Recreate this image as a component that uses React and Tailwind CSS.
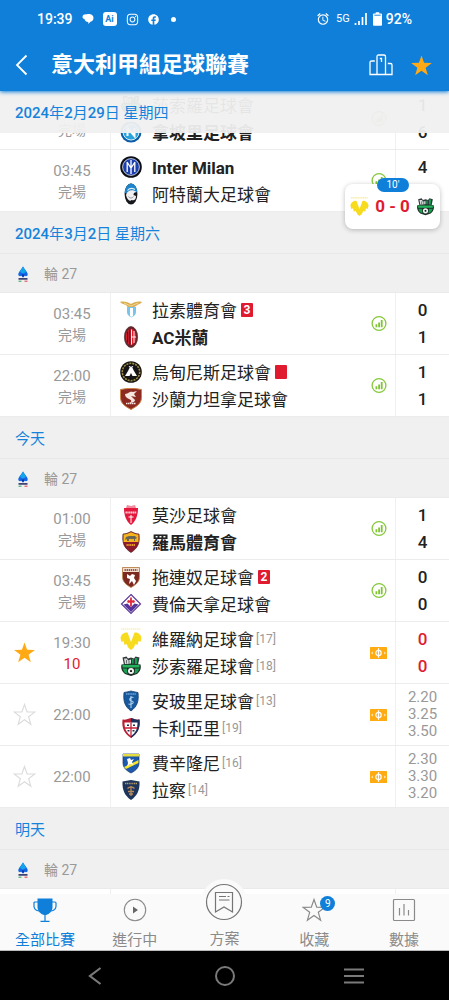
import { FaFacebook, FaInstagram } from "react-icons/fa";
import { MdOutlineAlarm } from "react-icons/md";

const crests = {
  napoli: (
    <>
      <circle cx="11" cy="11" r="10.5" fill="#0d5ea8" />
      <circle cx="11" cy="11" r="8" fill="#29a3dc" stroke="#d7edf8" strokeWidth="1" />
      <path d="M7.5 15V7l7 8V7" fill="none" stroke="#fff" strokeWidth="2" />
    </>
  ),
  inter: (
    <>
      <circle cx="11" cy="11" r="10.8" fill="#0b0e14" />
      <circle cx="11" cy="11" r="8.4" fill="#1c3fae" stroke="#e8ecf8" strokeWidth="0.8" />
      <path d="M11 4v14M7.200 6v10M14.800 6v10M7 6l4 6 4-6" fill="none" stroke="#fff" strokeWidth="1.3" />
    </>
  ),
  atalanta: (
    <>
      <ellipse cx="11" cy="11" rx="6.4" ry="10.5" fill="#15171c" />
      <path d="M4.700 10C4.700 3 9 .5 11 .5S17.300 3 17.300 9L11 10.500z" fill="#1d84cc" />
      <path d="M6 12c1-5 7-6 10.500-3-2 0-3 1-3 3l2.500 1c0 4-2 5-4.500 4-1 2-4.500 0-5.500-5z" fill="#f0eeee" />
      <path d="M7.500 7.500c2-2.500 5-2.500 7.500-1" fill="none" stroke="#dcecf7" strokeWidth="1.200" />
      <path d="M8.500 13.500c1.500 2 3.500 2 5 0" fill="none" stroke="#8a98a5" strokeWidth="1" />
    </>
  ),
  lazio: (
    <>
      <path d="M0 3c4-1 8 0 11 2 3-2 7-3 11-2-1 2-4 2-6 4-2 1-3 2-5 2S7 8 6 6C4 5 2 5 0 3z" fill="#d9ae52" />
      <path d="M4 4l7 3 7-3" fill="none" stroke="#f6dda0" strokeWidth="0.8" />
      <path d="M7 8h9v5c0 3-2 4-4.500 5.500C9 17 7 16 7 13z" fill="#79c4ea" />
      <path d="M10 9h3v8l-1.500 1-1.500-1z" fill="#fff" />
    </>
  ),
  milan: (
    <>
      <ellipse cx="11" cy="11" rx="6.600" ry="10.500" fill="#6e2229" stroke="#4b3034" strokeWidth="0.700" />
      <ellipse cx="11" cy="11" rx="5.200" ry="8" fill="#dd1f30" />
      <path d="M7.700 5.500v11M9.900 3.500v15" stroke="#17151a" strokeWidth="0.900" />
      <path d="M11.500 3.500v15M11.500 11H16M14 5v12" stroke="#fff" strokeWidth="0.900" />
    </>
  ),
  udinese: (
    <>
      <circle cx="11" cy="11" r="10.800" fill="#17150f" />
      <circle cx="11" cy="11" r="8.700" fill="none" stroke="#9a8b4a" strokeWidth="1.600" strokeDasharray="2 1" />
      <circle cx="11" cy="11" r="7" fill="#15151a" />
      <path d="M5 15l3-5 1.500-3h3L14 10l3 5h-4.500L11 12l-1.500 3z" fill="#fff" />
      <path d="M9 5.500l2 1 2-1" stroke="#fff" strokeWidth="1.200" fill="none" />
    </>
  ),
  salernitana: (
    <>
      <path d="M.5 1.500c7-1.500 14-1.500 21 0v8c0 6-5 9-10.500 12C5.500 18.500.5 15.500.5 9.500z" fill="#8c2a22" stroke="#c98345" strokeWidth="1" />
      <path d="M5 6c4 0 4-3 8-2l4-1-3 3 2 3-5-1 4 4c0 2-3 3-6 3 3-1 3-3 0-4-2-1-4-2-4-5z" fill="#f5e7df" />
      <path d="M6 15.500h10" stroke="#f5e7df" strokeWidth="1.500" strokeDasharray="1.500 .5" />
    </>
  ),
  monza: (
    <>
      <path d="M7 1l4 1 4-1 1 3H6z" fill="#ef8b9c" />
      <path d="M4 4h14c0 7-2 13-7 17C6 17 4 11 4 4z" fill="#e4173c" />
      <path d="M5.500 8.500h11" stroke="#fbd0d8" strokeWidth="1.800" strokeDasharray="1.400 .4" />
      <path d="M11 11v8M8.500 13h5" stroke="#fff" strokeWidth="1" />
    </>
  ),
  roma: (
    <>
      <path d="M3 3c3 0 5-1 8-2.500C14 2 16 3 19 3c1 9-1 14-8 18.500C4 17 2 12 3 3z" fill="#8e1a2e" stroke="#4f1d1d" strokeWidth="0.700" />
      <path d="M3.500 3.500c3 0 5-1 7.500-2.200C13.500 2.500 15.500 3.500 18.500 3.500V11h-15z" fill="#f4b51f" />
      <path d="M5 9l1-3 3-1h6l2 2-2 1v2h-1V8H9v2H7V8z" fill="#6a6453" />
      <path d="M6.500 14h9" stroke="#e79a2a" strokeWidth="1.800" strokeDasharray="1.300 .5" />
    </>
  ),
  torino: (
    <>
      <path d="M2.500 1.500h17V11c0 5-4 8-8.500 10.500C6.500 19 2.500 16 2.500 11z" fill="#7c2a20" stroke="#c08a50" strokeWidth="0.800" />
      <path d="M3 2h16v4H3z" fill="#f1dfcf" />
      <path d="M4.500 4h13" stroke="#7c2a20" strokeWidth="1.600" strokeDasharray="1.400 .7" />
      <path d="M7 8l3 2 2-2 3 1-1 3 2 3-2 4-2-4-3 3 1-5-3-1z" fill="#fff" />
    </>
  ),
  fiorentina: (
    <>
      <path d="M11 1.500L20.500 11 11 20.500 1.500 11z" fill="#fff" stroke="#5a3a9a" strokeWidth="1.200" />
      <path d="M3.500 11.500l4-1L11 14l3.500-3.500 4 1L11 19z" fill="#55339a" />
      <path d="M11 4.500v9M8 8.500h6" stroke="#e0283c" strokeWidth="1.800" />
      <circle cx="8.500" cy="8.500" r="1.300" fill="#e0283c" />
      <circle cx="13.500" cy="8.500" r="1.300" fill="#e0283c" />
    </>
  ),
  verona: (
    <>
      <path d="M1 1h20" stroke="#f5ea9a" strokeWidth="1.200" strokeDasharray="1.500 .5" />
      <path d="M.5 10c.5-3 3-6 7-5.500L11 14l3.500-9.500c4-.5 6.500 2.500 7 5.500l-1 4-2-1-1 4-2-1-2 4-2.500 2L8.500 20l-2-4-2 1-1-4-2 1z" fill="#f7db1f" />
    </>
  ),
  sassuolo: (
    <>
      <path d="M2.500 2.500l4-1 1.500 2 3-1 3 1 1.500-2 4 1L18 10H4z" fill="#30363a" />
      <path d="M4 3.500h3l1 2 3-1v4.500H5z" fill="#d9dedc" />
      <path d="M6.500 5v3.500M9 5.500v3" stroke="#30363a" strokeWidth="0.700" />
      <path d="M12 4h1.500v5H12zM15 3h2.500L17 9h-2z" fill="#16a052" />
      <path d="M1.500 9.500L11 8.500l9.500 1c1 4-.5 7-3.500 9.500l-6 2-6-2c-3-2.500-4.500-5.500-3.500-9.500z" fill="#1d2a25" />
      <path d="M2.500 9.800h17v2.700h-17z" fill="#22b45c" />
      <path d="M2.500 13.500h4.500l.5 5.500-3-1.500zM19.500 13.500H15l-.5 5.500 3-1.500z" fill="#17a04f" />
      <circle cx="11" cy="16" r="3" fill="#f3f3f3" />
      <path d="M11 14.800l1.200.9-.4 1.400h-1.600l-.4-1.400z" fill="#15191b" />
    </>
  ),
  empoli: (
    <>
      <path d="M4 2.500C7 2 9 1.500 11 1c2 .5 4 1 7 1.500 1 9-1 14-7 18.500C5 16.500 3 11.500 4 2.500z" fill="#17599f" stroke="#143c6c" strokeWidth="0.800" />
      <path d="M6 4h10" stroke="#6fa3d6" strokeWidth="1.400" strokeDasharray="1.300 .4" />
      <path d="M13.500 7.500c-4-1-5 3-2 3.500s2 4-3 3M11 6v12" fill="none" stroke="#b3d0ec" strokeWidth="1.100" />
    </>
  ),
  cagliari: (
    <>
      <path d="M2.500 2.500C6 3 8 2 11 1c3 1 5 2 8.500 1.500 1 9-2 14-8.500 18.500C4.500 16.500 1.500 11.500 2.500 2.500z" fill="#b81f34" />
      <path d="M11 1c3 1 5 2 8.500 1.500 1 9-2 14-8.500 18.500z" fill="#1b315c" />
      <path d="M4.500 5.500h13c0 7-2 10-6.500 13.500C6.500 15.500 4.500 12.500 4.500 5.500z" fill="#fff" />
      <path d="M11 5.500V19M5 11h12" stroke="#c8213a" strokeWidth="1.300" />
      <path d="M7 8.300h2M13 8.300h2M7.500 13.700h2M12.500 13.700h2" stroke="#222b48" strokeWidth="1.600" />
    </>
  ),
  frosinone: (
    <>
      <path d="M3 2h16v9c0 5-4 8-8 10C7 19 3 16 3 11z" fill="#1c58ac" stroke="#1a3765" strokeWidth="0.700" />
      <path d="M3 2h16v2.500H3z" fill="#e7dc3f" />
      <path d="M4 15L18.500 8v3L6 17z" fill="#f4e32c" />
      <path d="M7 7l3-1 1 2 3-1-2 3 1 3-3-1-3 3 1-4z" fill="#fff" />
    </>
  ),
  lecce: (
    <>
      <path d="M2.500 2.500L11 1l8.500 1.500C20 11 17 17 11 21 5 17 2 11 2.500 2.500z" fill="#1d355b" />
      <path d="M5 4.500h12" stroke="#b79c67" strokeWidth="1.300" strokeDasharray="1.200 .6" />
      <path d="M11 7v10M7.500 9.500c2-2 5-2 7 0M8 12.500h6M9 15h4" fill="none" stroke="#b98b5e" strokeWidth="1.300" />
    </>
  ),
};

function Crest({ team, className = "size-[22px]" }) {
  return (
    <svg viewBox="0 0 22 22" className={`${className} shrink-0`} aria-hidden="true">
      {crests[team]}
    </svg>
  );
}

function Star({ filled, className }) {
  return (
    <svg viewBox="0 0 24 24" className={className} aria-hidden="true">
      <path
        d="M12 1.500l2.700 7.700 8.100.2-6.500 4.900 2.300 7.900L12 17.500l-6.600 4.700 2.300-7.900-6.500-4.900 8.100-.2z"
        fill={filled ? "currentColor" : "none"}
        stroke={filled ? "none" : "currentColor"}
        strokeWidth="1.200"
      />
    </svg>
  );
}

function StatsIcon() {
  return (
    <svg viewBox="0 0 17 17" className="size-[17px]" aria-hidden="true">
      <circle cx="9" cy="8.500" r="6.900" fill="none" stroke="#86c83a" strokeWidth="1.300" />
      <path d="M5.500 9.300h1.800v3H5.500zM8.200 7.500H10v4.800H8.200zM10.800 5h1.800v7.300h-1.800z" fill="#7fc531" />
    </svg>
  );
}

function OddsIcon() {
  return (
    <svg viewBox="0 0 17 12" className="h-3 w-[17px]" aria-hidden="true">
      <rect width="17" height="12" rx="0.500" fill="#ffab12" />
      <circle cx="8.500" cy="6" r="2.700" fill="none" stroke="#fff" strokeWidth="1.200" />
      <path d="M8.500 1.200v9.600" stroke="#fff" strokeWidth="1.200" />
      <path d="M2.600 4.500v3L1.200 6zM14.400 4.500v3L15.800 6z" fill="#fff" />
    </svg>
  );
}

function LeagueLogo() {
  return (
    <svg viewBox="0 0 12 16" className="h-4 w-3" aria-hidden="true">
      <path d="M6 .5C7 2.500 9.500 4.500 10.600 7.500c.7 2.200-1.300 3.300-2.800 2.300L6 11.500 4.200 9.800c-1.500 1-3.500-.1-2.800-2.300C2.500 4.500 5 2.500 6 .5z" fill="#1267e8" />
      <path d="M6 .5c1 2 2.500 3.500 3 5.500L6 7.500 3 6C3.500 4 5 2.500 6 .5z" fill="#13a5ea" />
      <path d="M4.500 8.500h3L6 11.500z" fill="#12309b" />
      <path d="M1.500 12.900h9" stroke="#20235c" strokeWidth="1.500" />
      <path d="M1.500 15.200h3" stroke="#2aa562" strokeWidth="1" />
      <path d="M7.500 15.200h3" stroke="#e33a4c" strokeWidth="1" />
    </svg>
  );
}

const earlier = [
  {
    status: "完場",
    home: { crest: "sassuolo", name: "莎索羅足球會" },
    away: { crest: "napoli", name: "拿坡里足球會", winner: true },
    score: ["1", "6"],
  },
  {
    time: "03:45",
    status: "完場",
    home: { crest: "inter", name: "Inter Milan", winner: true },
    away: { crest: "atalanta", name: "阿特蘭大足球會" },
    score: ["4", "0"],
  },
];

const days = [
  {
    date: "2024年3月2日 星期六",
    matches: [
      {
        time: "03:45",
        status: "完場",
        home: { crest: "lazio", name: "拉素體育會", red: "3" },
        away: { crest: "milan", name: "AC米蘭", winner: true },
        score: ["0", "1"],
      },
      {
        time: "22:00",
        status: "完場",
        home: { crest: "udinese", name: "烏甸尼斯足球會", red: "" },
        away: { crest: "salernitana", name: "沙蘭力坦拿足球會" },
        score: ["1", "1"],
      },
    ],
  },
  {
    date: "今天",
    matches: [
      {
        time: "01:00",
        status: "完場",
        home: { crest: "monza", name: "莫沙足球會" },
        away: { crest: "roma", name: "羅馬體育會", winner: true },
        score: ["1", "4"],
      },
      {
        time: "03:45",
        status: "完場",
        home: { crest: "torino", name: "拖連奴足球會", red: "2" },
        away: { crest: "fiorentina", name: "費倫天拿足球會" },
        score: ["0", "0"],
      },
      {
        time: "19:30",
        minute: "10",
        star: "on",
        home: { crest: "verona", name: "維羅納足球會", rank: 17 },
        away: { crest: "sassuolo", name: "莎索羅足球會", rank: 18 },
        score: ["0", "0"],
      },
      {
        time: "22:00",
        star: "off",
        home: { crest: "empoli", name: "安玻里足球會", rank: 13 },
        away: { crest: "cagliari", name: "卡利亞里", rank: 19 },
        odds: ["2.20", "3.25", "3.50"],
      },
      {
        time: "22:00",
        star: "off",
        home: { crest: "frosinone", name: "費辛隆尼", rank: 16 },
        away: { crest: "lecce", name: "拉察", rank: 14 },
        odds: ["2.30", "3.30", "3.20"],
      },
    ],
  },
];

function Team({ team }) {
  return (
    <div className="flex h-[27px] items-center">
      <Crest team={team.crest} />
      <span className={`ml-[10px] pt-[2px] text-[17px] leading-[27px] text-[#222] ${team.winner ? "font-bold" : ""}`}>
        {team.name}
      </span>
      {team.rank && <span className="ml-[2px] text-xs text-[#999]">[{team.rank}]</span>}
      {team.red !== undefined && (
        <span className="ml-1 h-[14px] w-3 rounded-[1px] bg-[#e01b30] text-center text-xs leading-[14px] font-bold text-white">
          {team.red}
        </span>
      )}
    </div>
  );
}

function MatchRow({ match }) {
  const live = match.minute !== undefined;
  return (
    <li className="flex h-[62px] border-b border-[#ececec] bg-white">
      <div className="flex w-[111px] shrink-0 items-center border-r border-[#f0f0f0]">
        <div className="flex w-12 justify-center">
          {match.star && (
            <button type="button" aria-label="收藏" className={match.star === "on" ? "text-[#ffa915]" : "text-[#dcdcdc]"}>
              <Star filled={match.star === "on"} className="size-[23px]" />
            </button>
          )}
        </div>
        <div className="w-12 pt-[2px] text-center text-[15px] leading-[21px] text-[#999]">
          <div className="min-h-[21px]">{match.time}</div>
          {match.status && <div className="text-sm leading-[21px]">{match.status}</div>}
          {live && <div className="text-[#e01b30]">{match.minute}</div>}
        </div>
      </div>
      <div className="flex flex-1 items-center justify-between border-r border-[#f0f0f0] pr-2 pl-[9px]">
        <div>
          <Team team={match.home} />
          <Team team={match.away} />
        </div>
        {match.status ? <StatsIcon /> : <OddsIcon />}
      </div>
      <div className="flex w-[53px] shrink-0 flex-col items-center justify-center">
        {match.score?.map((goals, i) => (
          <span key={i} className={`text-[17px] leading-[27px] font-medium ${live ? "text-[#e01b30]" : "text-[#222]"}`}>
            {goals}
          </span>
        ))}
        {match.odds?.map((odd) => (
          <span key={odd} className="text-[15px] leading-[17px] text-[#999]">
            {odd}
          </span>
        ))}
      </div>
    </li>
  );
}

// numerals are a step heavier than the characters around them
function DateText({ text }) {
  return (
    <span>
      {text.split(/(\d+)/).map((part, i) => (
        <span key={i} className={i % 2 ? "font-medium" : ""}>
          {part}
        </span>
      ))}
    </span>
  );
}

function DayHeading({ children }) {
  return (
    <>
      <h2 className="flex h-[42px] items-center border-b border-[#e7e7e7] bg-[#f0f0f0] px-[15px] pt-[3px] text-[15px] text-[#1583dc]">
        <DateText text={children} />
      </h2>
      <div className="flex h-[39px] items-center gap-[15px] border-b border-[#eaeaea] bg-[#f0f0f0] pt-px pl-[17px] text-sm text-[#999]">
        <LeagueLogo />
        <span>輪 27</span>
      </div>
    </>
  );
}

function StatusBar() {
  return (
    <div className="flex h-[38px] items-center justify-between px-[37px] text-sm font-medium">
      <div className="flex items-center gap-[9px]">
        <span>19:39</span>
        <svg viewBox="0 0 12 12" className="size-3" aria-hidden="true">
          <path d="M.5 4C.5 1.500 3 1 5 1.300c3-.8 6.500.7 6.500 3.700 0 2-1.200 3.300-3 3.800L6.300 11V8.900C4 9 2.700 7.500 2.500 6 1.300 5.700.5 5 .5 4z" fill="currentColor" />
        </svg>
        <span className="w-[14px] rounded-[3px] bg-white text-center text-[9px] leading-[14px] font-bold text-[#0f7fd9]">Ai</span>
        <FaInstagram className="size-[13px]" />
        <FaFacebook className="size-[11px]" />
        <span className="ml-[3px] size-[5px] rounded-full bg-white" />
      </div>
      <div className="flex items-center gap-1">
        <MdOutlineAlarm className="mr-[2px] size-[14px]" />
        <span className="text-[11px] font-normal">5G</span>
        <svg viewBox="0 0 14 12" className="h-3 w-[14px]" aria-hidden="true">
          <path d="M1.500 12v-2M5 12V8M8.500 12V4M12 12V0" stroke="currentColor" strokeWidth="1.700" />
        </svg>
        <svg viewBox="0 0 10 15" className="ml-px h-[14px] w-[9px]" aria-hidden="true">
          <path d="M3 0h4v1.500h2q1 0 1 1V14q0 1-1 1H1q-1 0-1-1V2.500q0-1 1-1h2z" fill="currentColor" />
          <path d="M1.500 3.300h7" stroke="#0f7fd9" strokeWidth="1" />
        </svg>
        <span>92%</span>
      </div>
    </div>
  );
}

function Header() {
  return (
    <header className="relative z-20 shrink-0 bg-[#0f7fd9] text-white shadow-[0_1px_4px_#0f7fd9]">
      <StatusBar />
      <div className="flex h-[53px] items-center pt-px pr-4 pl-[14px]">
        <button type="button" aria-label="返回">
          <svg viewBox="0 0 15 22" className="h-[22px] w-[15px]" fill="none" aria-hidden="true">
            <path d="M12.500 1.500L3 11l9.500 9.500" stroke="currentColor" strokeWidth="1.800" />
          </svg>
        </button>
        <h1 className="ml-[22px] flex-1 text-[22px] leading-[30px] font-bold">意大利甲組足球聯賽</h1>
        <button type="button" aria-label="積分榜">
          <svg viewBox="0 0 24 22" className="h-[22px] w-6" fill="none" stroke="currentColor" strokeWidth="1.300" aria-hidden="true">
            <path d="M5.800 7H2.500Q1 7 1 8.500V20.500H23V11Q23 9.500 21.500 9.500H18.800" />
            <path d="M8 20.500V2.500Q8 1 9.500 1H15Q16.500 1 16.500 2.500V20.500" />
            <path d="M10.800 4.500h1.700v3.500" />
          </svg>
        </button>
        <button type="button" aria-label="收藏聯賽" className="ml-[17px] text-[#ffa915]">
          <Star filled className="size-[23px]" />
        </button>
      </div>
    </header>
  );
}

function LiveScore() {
  return (
    <div className="absolute top-[93px] right-[9px] z-10 flex h-[45px] w-[95px] items-center justify-between rounded-lg bg-white px-[5px] shadow-[0_1px_5px_rgba(0,0,0,0.25)]">
      <span className="absolute -top-[6px] left-8 h-[14px] w-8 rounded-full bg-[#0f7fd9] text-center text-[10px] leading-[14px] text-white">
        10'
      </span>
      <Crest team="verona" className="size-[19px]" />
      <span className="text-[17px] font-bold text-[#e01b30]">0 - 0</span>
      <Crest team="sassuolo" className="size-[19px]" />
    </div>
  );
}

function TabBar() {
  const tab = "flex flex-1 flex-col items-center text-[15px] leading-5 text-[#8a8a8a]";
  return (
    <nav className="relative z-10 flex h-[57px] shrink-0 border-b border-[#bbb] bg-[#fafafa]">
      <a href="#all" className={`${tab} text-[#0f7fd9]!`}>
        <svg viewBox="0 0 24 26" className="mt-[3px] h-[26px] w-6" aria-hidden="true">
          <path d="M4.500 1.500h15V10c0 4-3 7-6.500 8h-2c-3.500-1-6.500-4-6.500-8z" fill="currentColor" />
          <path d="M5 5H2Q1 5 1 6v3.500Q1.500 13.500 6 14M19 5h3q1 0 1 1v3.500q-.5 4-5 4.500M12 17v7M7.500 24.300h9" fill="none" stroke="currentColor" strokeWidth="1.200" />
        </svg>
        <span className="mt-[7px]">全部比賽</span>
      </a>
      <a href="#live" className={tab}>
        <svg viewBox="0 0 24 26" className="mt-[3px] h-[26px] w-6" aria-hidden="true">
          <circle cx="12" cy="13" r="10.700" fill="none" stroke="currentColor" strokeWidth="1.100" />
          <path d="M10 9.500l5 3.500-5 3.500z" fill="#666" />
        </svg>
        <span className="mt-[7px]">進行中</span>
      </a>
      <a href="#tips" className={tab}>
        <span className="-mt-[15px] rounded-full bg-[#fafafa] p-1">
          <svg viewBox="0 0 38 38" className="size-[38px]" fill="none" stroke="#757575" strokeWidth="1.200" aria-hidden="true">
            <circle cx="19" cy="19" r="17.500" />
            <path d="M10.500 9.500h17v19.500L19 24l-8.500 5z" />
            <path d="M14 13.500h7M22.500 13.500h2M14 17h10.500" />
          </svg>
        </span>
        <span className="mt-1">方案</span>
      </a>
      <a href="#favourites" className={tab}>
        <span className="relative mt-[3px]">
          <Star className="h-[26px] w-6" />
          <span className="absolute -top-px left-[18px] size-[15px] rounded-full bg-[#0f7fd9] text-center text-[10px] leading-[15px] text-white">9</span>
        </span>
        <span className="mt-[7px]">收藏</span>
      </a>
      <a href="#data" className={tab}>
        <svg viewBox="0 0 24 26" className="mt-[3px] h-[26px] w-6" fill="none" stroke="currentColor" strokeWidth="1.200" aria-hidden="true">
          <rect x="1.500" y="2.500" width="21" height="21" rx="1" />
          <path d="M7.500 11v7.500M12 7v11.500M16.500 13v5.500" />
        </svg>
        <span className="mt-[7px]">數據</span>
      </a>
    </nav>
  );
}

function SystemBar() {
  return (
    <div className="flex h-[49px] shrink-0 items-center bg-black px-[30px] text-[#7a7a7a]">
      <button type="button" aria-label="上一頁" className="flex flex-1 justify-center">
        <svg viewBox="0 0 20 20" className="size-5" fill="none" stroke="currentColor" strokeWidth="2.200" aria-hidden="true">
          <path d="M15.500 2L5 10l10.500 8" />
        </svg>
      </button>
      <button type="button" aria-label="主畫面" className="flex flex-1 justify-center">
        <span className="size-5 rounded-full border-2 border-[#7a7a7a]" />
      </button>
      <button type="button" aria-label="選單" className="flex flex-1 justify-center">
        <svg viewBox="0 0 20 20" className="size-5" fill="none" stroke="currentColor" strokeWidth="2.200" aria-hidden="true">
          <path d="M0 3.500h20M0 10h20M0 16.500h20" />
        </svg>
      </button>
    </div>
  );
}

export default function App() {
  return (
    <div className="flex h-screen flex-col bg-white font-[Roboto,'Noto_Sans_CJK_TC',sans-serif]">
      <Header />
      <main className="relative flex-1 overflow-hidden">
        <section>
          <h2 className="relative z-10 -mb-[45px] flex h-[42px] items-center bg-[#f0f0f0]/95 px-[15px] pt-[3px] text-[15px] text-[#1583dc]">
            <DateText text="2024年2月29日 星期四" />
          </h2>
          <ul>
            {earlier.map((match) => (
              <MatchRow key={match.home.crest} match={match} />
            ))}
          </ul>
        </section>
        {days.map((day) => (
          <section key={day.date}>
            <DayHeading>{day.date}</DayHeading>
            <ul>
              {day.matches.map((match) => (
                <MatchRow key={match.home.crest} match={match} />
              ))}
            </ul>
          </section>
        ))}
        <section>
          <DayHeading>明天</DayHeading>
          <div className="flex h-[62px]">
            <div className="w-[111px] border-r border-[#f0f0f0]" />
            <div className="flex-1 border-r border-[#f0f0f0]" />
            <div className="w-[53px]" />
          </div>
        </section>
        <LiveScore />
      </main>
      <TabBar />
      <SystemBar />
    </div>
  );
}
